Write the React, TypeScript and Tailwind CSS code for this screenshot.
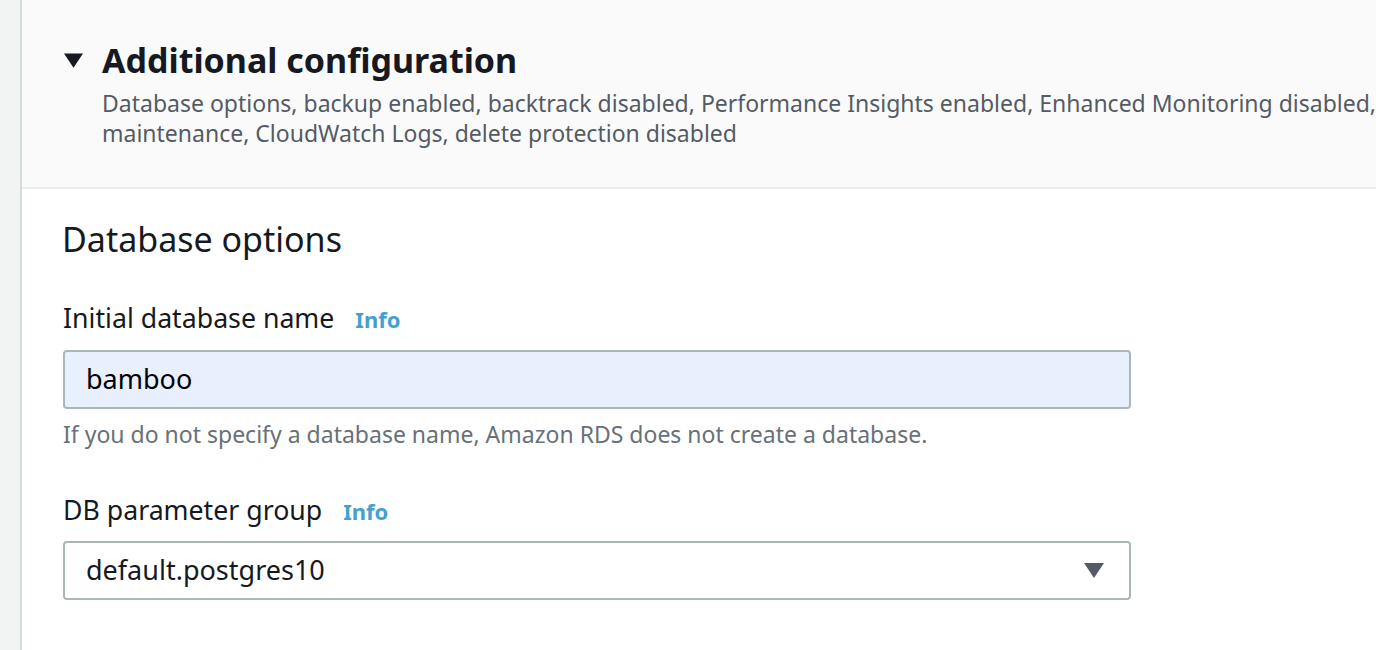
import React from "react";

const font = { fontFamily: '"Noto Sans", "Open Sans", sans-serif' };

function Caret({ className }: { className: string }) {
  return (
    <svg viewBox="0 0 20 15" className={className} aria-hidden="true">
      <path d="M0 0 H20 L10 15 Z" fill="currentColor" />
    </svg>
  );
}

function FieldLabel({ children }: { children: React.ReactNode }) {
  return (
    <div className="flex items-baseline gap-[21px] text-[26.7px] leading-[36px] text-[#16191f]">
      <span>{children}</span>
      <a className="text-[22px] font-bold text-[#44a0cc]">Info</a>
    </div>
  );
}

export default function App() {
  return (
    <div className="flex h-[650px] w-full overflow-hidden bg-white" style={font}>
      {/* side strip */}
      <div className="w-[22px] shrink-0 bg-[#f2f3f3] border-r-2 border-[#d5dbdb]" />

      <div className="flex-1 min-w-0">
        {/* expandable header */}
        <div className="bg-[#fafafa] border-b-2 border-[#eaeded] pt-[36px] pb-[39px] pl-[42px]">
          <div className="flex items-center gap-[19px]">
            <Caret className="w-[19px] h-[15px] text-[#16191f]" />
            <h2 className="text-[34px] leading-[48px] font-bold text-[#16191f]">
              Additional configuration
            </h2>
          </div>
          <p className="mt-[4px] pl-[38px] text-[23px] leading-[30px] text-[#545b64] whitespace-nowrap">
            Database options, backup enabled, backtrack disabled, Performance Insights enabled, Enhanced Monitoring disabled,
            <br />
            maintenance, CloudWatch Logs, delete protection disabled
          </p>
        </div>

        {/* content */}
        <div className="pl-[41px] pt-[26px]">
          <h3 className="text-[34px] leading-[48px] text-[#16191f] -ml-px">Database options</h3>

          <div className="mt-[37px]">
            <FieldLabel>Initial database name</FieldLabel>
            <div className="mt-[13px] w-[1068px] h-[59px] rounded-[4px] border-2 border-[#aab7b8] bg-[#e8f0fe] flex items-center px-[21px] text-[27px] text-black">
              bamboo
            </div>
            <p className="mt-[10px] text-[23px] leading-[30px] text-[#687078]">
              If you do not specify a database name, Amazon RDS does not create a database.
            </p>
          </div>

          <div className="mt-[43px]">
            <FieldLabel>DB parameter group</FieldLabel>
            <div className="mt-[12px] w-[1068px] h-[59px] rounded-[4px] border-2 border-[#aab7b8] bg-white flex items-center justify-between pl-[21px] pr-[25px] text-[27px] text-[#16191f]">
              <span>default.postgres10</span>
              <Caret className="w-[20px] h-[15px] text-[#545b64]" />
            </div>
          </div>
        </div>
      </div>
    </div>
  );
}
